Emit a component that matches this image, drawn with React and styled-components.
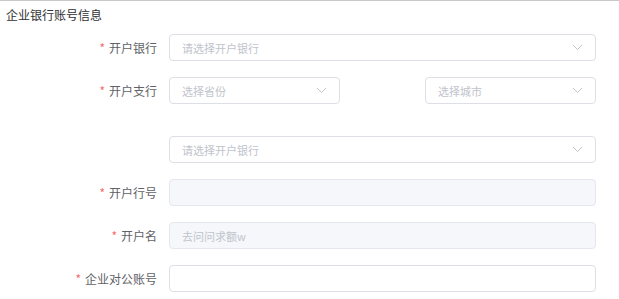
import React from "react";
import styled, { createGlobalStyle } from "styled-components";

const GlobalStyle = createGlobalStyle`
  html, body {
    margin: 0;
    padding: 0;
    background: #ffffff;
    font-family: "Noto Sans CJK SC", "Noto Sans", sans-serif;
  }
`;

const Chevron = () => (
  <svg width="11" height="7" viewBox="0 0 11 7" fill="none">
    <path d="M1 1L5.5 5.5L10 1" stroke="#c0c4cc" strokeWidth="1" />
  </svg>
);

export default () => {
  return (
    <Wrapper>
      <GlobalStyle />
      <Title>企业银行账号信息</Title>
      <Form>
        <Row>
          <Label>开户银行</Label>
          <Field>
            <Select>
              <Placeholder>请选择开户银行</Placeholder>
              <Chevron />
            </Select>
          </Field>
        </Row>
        <Row>
          <Label>开户支行</Label>
          <Field>
            <Split>
              <Select>
                <Placeholder>选择省份</Placeholder>
                <Chevron />
              </Select>
              <Select>
                <Placeholder>选择城市</Placeholder>
                <Chevron />
              </Select>
            </Split>
          </Field>
        </Row>
        <Row $extra>
          <Label $plain />
          <Field>
            <Select>
              <Placeholder>请选择开户银行</Placeholder>
              <Chevron />
            </Select>
          </Field>
        </Row>
        <Row>
          <Label>开户行号</Label>
          <Field>
            <Input $disabled />
          </Field>
        </Row>
        <Row>
          <Label>开户名</Label>
          <Field>
            <Input $disabled>
              <Placeholder>去问问求额w</Placeholder>
            </Input>
          </Field>
        </Row>
        <Row>
          <Label>企业对公账号</Label>
          <Field>
            <Input />
          </Field>
        </Row>
      </Form>
    </Wrapper>
  );
};

const Wrapper = styled.div`
  width: 619px;
  height: 299px;
  box-sizing: border-box;
  border-top: 1px solid #c8c8c8;
  overflow: hidden;
`;

const Title = styled.div`
  padding: 4px 0 0 6px;
  height: 20px;
  line-height: 20px;
  font-size: 12px;
  color: #303133;
`;

const Form = styled.div`
  display: flex;
  flex-direction: column;
  gap: 16px;
  padding-top: 9px;
`;

const Row = styled.div`
  display: flex;
  align-items: center;
  height: 27px;
  margin-top: ${(p) => (p.$extra ? "16px" : "0")};
`;

const Label = styled.div`
  width: 157px;
  padding-right: 12px;
  text-align: right;
  font-size: 12px;
  color: #606266;
  white-space: nowrap;
  &::before {
    content: ${(p) => (p.$plain ? "none" : '"*"')};
    color: #f56c6c;
    margin-right: 4px;
  }
`;

const Field = styled.div`
  width: 427px;
`;

const Split = styled.div`
  display: flex;
  justify-content: space-between;
`;

const Select = styled.div`
  flex: 0 0 auto;
  width: 100%;
  ${Split} & {
    width: 171px;
  }
  height: 27px;
  box-sizing: border-box;
  border: 1px solid #dcdfe6;
  border-radius: 4px;
  background: #ffffff;
  display: flex;
  align-items: center;
  justify-content: space-between;
  padding: 0 12px 0 12px;
`;

const Input = styled.div`
  height: 27px;
  box-sizing: border-box;
  border: 1px solid ${(p) => (p.$disabled ? "#e4e7ed" : "#dcdfe6")};
  border-radius: 4px;
  background: ${(p) => (p.$disabled ? "#f5f7fa" : "#ffffff")};
  display: flex;
  align-items: center;
  padding: 0 12px;
`;

const Placeholder = styled.span`
  font-size: 11px;
  color: #c0c4cc;
`;
